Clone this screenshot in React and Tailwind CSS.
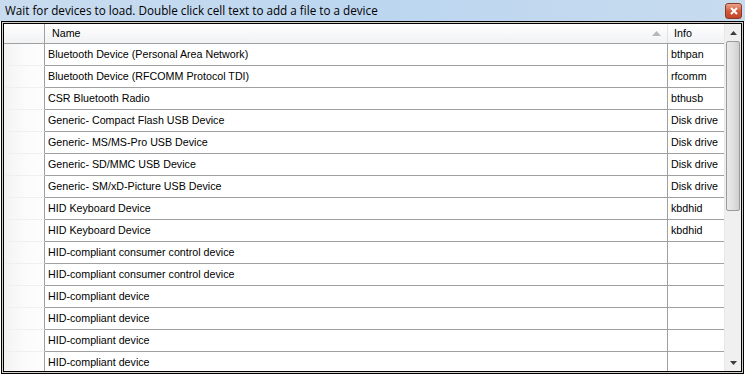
// Device list window (WinForms DataGridView look)

const rows = [
  ['Bluetooth Device (Personal Area Network)', 'bthpan'],
  ['Bluetooth Device (RFCOMM Protocol TDI)', 'rfcomm'],
  ['CSR Bluetooth Radio', 'bthusb'],
  ['Generic- Compact Flash USB Device', 'Disk drive'],
  ['Generic- MS/MS-Pro USB Device', 'Disk drive'],
  ['Generic- SD/MMC USB Device', 'Disk drive'],
  ['Generic- SM/xD-Picture USB Device', 'Disk drive'],
  ['HID Keyboard Device', 'kbdhid'],
  ['HID Keyboard Device', 'kbdhid'],
  ['HID-compliant consumer control device', ''],
  ['HID-compliant consumer control device', ''],
  ['HID-compliant device', ''],
  ['HID-compliant device', ''],
  ['HID-compliant device', ''],
  ['HID-compliant device', ''],
];

function CloseButton() {
  return (
    <div className="w-[17px] h-[16px] rounded-[3px] border border-[#8a3a26] bg-gradient-to-b from-[#e9a58e] via-[#d2583a] to-[#c2452a] flex items-center justify-center">
      <svg width="8" height="8" viewBox="0 0 8 8">
        <path d="M1 1 L7 7 M7 1 L1 7" stroke="#fff" strokeWidth="2" />
      </svg>
    </div>
  );
}

export default function App() {
  return (
    <div className="w-[745px] h-[375px] overflow-hidden bg-white flex flex-col" style={{ fontFamily: '"Liberation Sans", Arial, sans-serif' }}>
      {/* Barra de título */}
      <div className="h-[21px] shrink-0 flex items-center justify-between pl-[5px] pr-[3px] bg-gradient-to-r from-[#c9dcef] via-[#bcd6f0] to-[#c7dbee]">
        <span className="text-[11.7px] text-black leading-none" style={{ fontFamily: '"Open Sans", "Noto Sans", sans-serif' }}>
          Wait for devices to load. Double click cell text to add a file to a device
        </span>
        <CloseButton />
      </div>

      {/* Marco con doble borde */}
      <div className="flex-1 min-h-0 border border-black p-[1px] bg-[#d4d0c8] ml-[1px] mr-[1px] mb-[1px]">
        <div className="h-full border border-black bg-white flex overflow-hidden">
          <div className="flex-1 min-w-0 flex flex-col text-[10.7px] text-black">
            {/* Cabecera */}
            <div className="h-[20px] shrink-0 flex border-b border-[#a0a0a0] bg-gradient-to-b from-white to-[#f1f2f4]">
              <div className="w-[41px] shrink-0 border-r border-[#a0a0a0] bg-gradient-to-b from-white to-[#f1f2f4]" />
              <div className="flex-1 flex items-center pl-[7px] pr-[6px] border-r border-[#e2e3e5]">
                <span className="flex-1">Name</span>
                <svg width="9" height="5" viewBox="0 0 9 5">
                  <path d="M0 5 L4.5 0 L9 5 Z" fill="#b6b8bb" />
                </svg>
              </div>
              <div className="w-[56px] flex items-center pl-[6px]">Info</div>
            </div>
            {/* Filas */}
            {rows.map((r, i) => (
              <div key={i} className="h-[22px] shrink-0 flex">
                <div className="w-[41px] shrink-0 border-r border-[#a0a0a0] border-b border-b-[#f0f0f0] bg-gradient-to-r from-[#f3f3f3] via-[#fbfbfb] to-[#fdfdfd]" />
                <div className="flex-1 flex items-center pl-[3px] border-r border-b border-[#a0a0a0] whitespace-nowrap">{r[0]}</div>
                <div className="w-[56px] flex items-center pl-[3px] border-b border-[#a0a0a0] whitespace-nowrap">{r[1]}</div>
              </div>
            ))}
          </div>

          {/* Barra de desplazamiento */}
          <div className="w-[17px] shrink-0 flex flex-col bg-[#f0f0f0] border-l border-[#e8e8e8]">
            <div className="h-[17px] flex items-center justify-center">
              <svg width="7" height="4" viewBox="0 0 7 4"><path d="M0 4 L3.5 0 L7 4 Z" fill="#3c3c3c" /></svg>
            </div>
            <div className="h-[170px] mx-[1px] rounded-[2px] border border-[#9a9a9a] bg-gradient-to-r from-[#e9e9e9] via-[#e0e0e0] to-[#cfcfcf]" />
            <div className="flex-1" />
            <div className="h-[17px] flex items-center justify-center">
              <svg width="7" height="4" viewBox="0 0 7 4"><path d="M0 0 L7 0 L3.5 4 Z" fill="#3c3c3c" /></svg>
            </div>
          </div>
        </div>
      </div>
    </div>
  );
}
